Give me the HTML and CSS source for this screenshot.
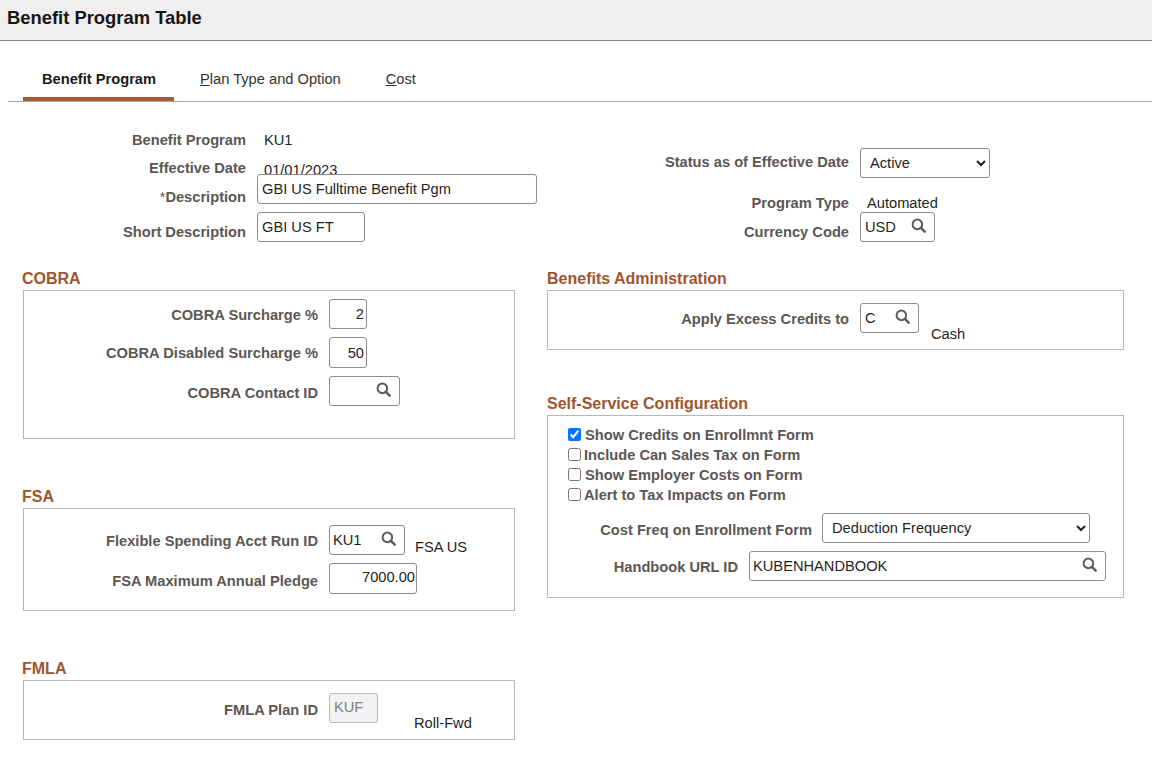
FILE: index.html
```html
<!DOCTYPE html>
<html lang="en">
<head>
    <meta charset="UTF-8">
    <meta name="viewport" content="width=device-width, initial-scale=1.0">
    <title>Benefit Program Table</title>
    <link rel="stylesheet" href="styles.css">
</head>
<body>
    <svg class="icon-defs" width="0" height="0">
        <symbol id="search" viewBox="0 0 16 16">
            <circle cx="6.8" cy="6.8" r="5.1" fill="none" stroke="currentColor" stroke-width="2.1"/>
            <path d="M10.6 10.6L14.6 14.6" fill="none" stroke="currentColor" stroke-width="2.6" stroke-linecap="round"/>
        </symbol>
    </svg>

    <header class="page-title">Benefit Program Table</header>

    <nav class="tabs">
        <a class="tab active">Benefit Program</a>
        <a class="tab"><u>P</u>lan Type and Option</a>
        <a class="tab"><u>C</u>ost</a>
    </nav>

    <main class="columns">
        <div class="left-col">
            <div class="top-block top-left">
                <div class="row row-program">
                    <label class="field-label">Benefit Program</label>
                    <span class="value">KU1</span>
                </div>
                <div class="row row-date">
                    <label class="field-label">Effective Date</label>
                    <span class="value">01/01/2023</span>
                </div>
                <div class="row row-desc">
                    <label class="field-label"><span class="req">*</span>Description</label>
                    <input type="text" class="input desc-input" value="GBI US Fulltime Benefit Pgm">
                </div>
                <div class="row row-short">
                    <label class="field-label">Short Description</label>
                    <input type="text" class="input short-input" value="GBI US FT">
                </div>
            </div>

            <h2 class="section-title">COBRA</h2>
            <section class="box cobra-box">
                <div class="row row-pad6">
                    <label class="field-label">COBRA Surcharge %</label>
                    <input type="text" class="input num pct-input" value="2">
                </div>
                <div class="row row-pad6 row-tall">
                    <label class="field-label">COBRA Disabled Surcharge %</label>
                    <input type="text" class="input num pct-input" value="50">
                </div>
                <div class="row row-pad7">
                    <label class="field-label">COBRA Contact ID</label>
                    <div class="lookup contact-lookup">
                        <input type="text" value="">
                        <svg class="search-icon"><use href="#search"/></svg>
                    </div>
                </div>
            </section>

            <h2 class="section-title spaced">FSA</h2>
            <section class="box fsa-box">
                <div class="row row-pad6">
                    <label class="field-label">Flexible Spending Acct Run ID</label>
                    <div class="lookup run-lookup">
                        <input type="text" value="KU1">
                        <svg class="search-icon"><use href="#search"/></svg>
                    </div>
                    <span class="value fsa-note">FSA US</span>
                </div>
                <div class="row row-pad8 row-tall">
                    <label class="field-label">FSA Maximum Annual Pledge</label>
                    <input type="text" class="input num pledge-input" value="7000.00">
                </div>
            </section>

            <h2 class="section-title spaced">FMLA</h2>
            <section class="box fmla-box">
                <div class="row row-pad7">
                    <label class="field-label">FMLA Plan ID</label>
                    <input type="text" class="input plan-input" value="KUF" disabled>
                    <span class="value fmla-note">Roll-Fwd</span>
                </div>
            </section>
        </div>

        <div class="right-col">
            <div class="top-block top-right">
                <div class="row row-status">
                    <label class="field-label">Status as of Effective Date</label>
                    <select class="select status-select">
                        <option>Active</option>
                        <option>Inactive</option>
                    </select>
                </div>
                <div class="row row-type">
                    <label class="field-label">Program Type</label>
                    <span class="value">Automated</span>
                </div>
                <div class="row row-short">
                    <label class="field-label">Currency Code</label>
                    <div class="lookup currency-lookup">
                        <input type="text" value="USD">
                        <svg class="search-icon"><use href="#search"/></svg>
                    </div>
                </div>
            </div>

            <h2 class="section-title">Benefits Administration</h2>
            <section class="box admin-box">
                <div class="row row-pad6">
                    <label class="field-label">Apply Excess Credits to</label>
                    <div class="lookup credit-lookup">
                        <input type="text" value="C">
                        <svg class="search-icon"><use href="#search"/></svg>
                    </div>
                    <span class="value cash-note">Cash</span>
                </div>
            </section>

            <h2 class="section-title self-title">Self-Service Configuration</h2>
            <section class="box self-box">
                <label class="check-row"><input type="checkbox" checked><span class="wide">Show Credits on Enrollmnt Form</span></label>
                <label class="check-row"><input type="checkbox"><span>Include Can Sales Tax on Form</span></label>
                <label class="check-row"><input type="checkbox"><span class="wide">Show Employer Costs on Form</span></label>
                <label class="check-row"><input type="checkbox"><span>Alert to Tax Impacts on Form</span></label>
                <div class="row row-freq">
                    <label class="field-label">Cost Freq on Enrollment Form</label>
                    <select class="select freq-select">
                        <option>Deduction Frequency</option>
                        <option>Annual</option>
                    </select>
                </div>
                <div class="row row-pad6 row-handbook">
                    <label class="field-label">Handbook URL ID</label>
                    <div class="lookup handbook-lookup">
                        <input type="text" value="KUBENHANDBOOK">
                        <svg class="search-icon"><use href="#search"/></svg>
                    </div>
                </div>
            </section>
        </div>
    </main>
</body>
</html>
```

FILE: styles.css
```css
* {
    box-sizing: border-box;
}

body {
    margin: 0;
    background-color: #fff;
    color: #1f1f1f;
    font-family: "Liberation Sans", Arial, sans-serif;
    font-size: 14.67px;
    line-height: 20px;
}

.icon-defs {
    display: block;
    height: 0;
}

.page-title {
    height: 41px;
    padding: 7px 0 0 7px;
    background-color: #f0efed;
    border-bottom: 1px solid #8c8984;
    color: #161616;
    font-size: 18.4px;
    font-weight: bold;
    line-height: 22px;
}

.tabs {
    display: flex;
    align-items: flex-end;
    gap: 7px;
    height: 61px;
    margin-left: 8px;
    padding-left: 15px;
    border-bottom: 1px solid #a9a5a0;
}

.tab {
    height: 32px;
    padding: 0 19px;
    color: #333;
    line-height: 20px;
    white-space: nowrap;
}

.tab.active {
    width: 151px;
    padding-right: 0;
    border-bottom: 4px solid #a55a37;
    color: #1a1a1a;
    font-weight: bold;
}

.columns {
    display: flex;
    gap: 32px;
    margin-left: 23px;
}

.left-col {
    width: 492px;
}

.right-col {
    width: 577px;
}

.top-block {
    height: 167px;
}

.top-left {
    padding-top: 28px;
}

.top-right {
    padding-top: 46px;
}

.section-title {
    height: 18px;
    margin: 0 0 3px -1px;
    color: #a0552f;
    font-size: 16px;
    font-weight: bold;
    line-height: 20px;
}

.right-col .section-title {
    margin-left: 0;
}

.section-title.spaced {
    margin-top: 48px;
}

.right-col .self-title {
    margin-top: 44px;
}

.box {
    border: 1px solid #b9b5b0;
}

.row {
    display: flex;
    align-items: flex-start;
    height: 30px;
}

.field-label {
    flex: none;
    color: #5b5754;
    font-weight: bold;
    text-align: right;
}

.req {
    font-weight: normal;
}

.value {
    margin-left: 18px;
}

.input,
.lookup,
.select {
    flex: none;
    height: 30px;
    margin-left: 11px;
    background-color: #fff;
    border: 1px solid #8f8b86;
    border-radius: 3px;
    color: #1f1f1f;
    font-family: inherit;
    font-size: 14.67px;
}

.input {
    padding: 0 4px;
}

.input.num {
    padding-right: 2px;
    text-align: right;
}

.input:disabled {
    background-color: #f3f2f0;
    border-color: #bdbab6;
    color: #80807e;
}

.select {
    padding-left: 5px;
}

.lookup {
    display: flex;
    align-items: center;
}

.lookup input {
    flex: 1;
    min-width: 0;
    height: 100%;
    padding: 0 0 0 4px;
    background: none;
    border: none;
    outline: none;
    color: inherit;
    font-family: inherit;
    font-size: 14.67px;
}

.search-icon {
    flex: none;
    width: 15px;
    height: 15px;
    margin: 0 8px 4px 0;
    color: #5f5b57;
}

/* top left rows */
.top-left .field-label {
    width: 223px;
}

.top-left .row-program {
    height: 20px;
}

.top-left .row-date {
    height: 16px;
    margin-top: 8px;
}

.row-date .value {
    padding-top: 2px;
}

.row-desc .field-label {
    padding-top: 13px;
}

.desc-input {
    width: 280px;
}

.row-short {
    margin-top: 8px;
}

.row-short .field-label {
    padding-top: 10px;
}

.short-input {
    width: 108px;
}

/* top right rows */
.top-right .field-label {
    width: 302px;
}

.row-status .field-label {
    padding-top: 4px;
}

.status-select {
    width: 130px;
}

.row-type {
    height: 20px;
    margin-top: 14px;
}

.row-type .value,
.row-type .field-label {
    padding-top: 1px;
}

.top-right .row-short {
    margin-top: 0;
}

.currency-lookup {
    width: 75px;
}

/* shared label offsets inside boxes */
.row-pad6 .field-label {
    padding-top: 6px;
}

.row-pad7 .field-label {
    padding-top: 7px;
}

.row-pad8 .field-label {
    padding-top: 8px;
}

.row-tall,
.row-tall .input {
    height: 31px;
}

/* COBRA */
.cobra-box {
    height: 149px;
    padding-top: 8px;
}

.cobra-box .row + .row {
    margin-top: 8px;
}

.cobra-box .field-label,
.fsa-box .field-label,
.fmla-box .field-label {
    width: 294px;
}

.pct-input {
    width: 38px;
}

.contact-lookup {
    width: 71px;
}

/* FSA */
.fsa-box {
    height: 103px;
    padding-top: 16px;
}

.fsa-box .row + .row {
    margin-top: 8px;
}

.run-lookup {
    width: 76px;
}

.run-lookup input,
.handbook-lookup input {
    padding-left: 3px;
}

.fsa-note {
    margin-left: 10px;
    padding-top: 12px;
}

.input.pledge-input {
    width: 88px;
    padding-right: 1px;
    padding-bottom: 3px;
}

/* FMLA */
.fmla-box {
    height: 60px;
    padding-top: 12px;
}

.plan-input {
    width: 49px;
    padding-bottom: 2px;
}

.fmla-note {
    margin-left: 36px;
    padding-top: 20px;
}

/* Benefits Administration */
.admin-box {
    height: 60px;
    padding-top: 12px;
}

.admin-box .field-label {
    width: 301px;
}

.credit-lookup {
    width: 59px;
}

.cash-note {
    margin-left: 12px;
    padding-top: 21px;
}

/* Self-Service Configuration */
.self-box {
    height: 183px;
    padding: 8px 0 0 20px;
}

.check-row {
    display: flex;
    align-items: center;
    height: 20px;
    color: #5b5754;
    font-weight: bold;
}

.check-row input {
    flex: none;
    width: 13px;
    height: 13px;
    margin: 0 3px 0 0;
}

.check-row span {
    padding-top: 1px;
}

.check-row .wide {
    margin-left: 1px;
}

.row-freq {
    margin-top: 9px;
    margin-left: -20px;
}

.row-freq .field-label {
    width: 264px;
    padding-top: 7px;
}

.freq-select {
    width: 268px;
    margin-left: 10px;
}

.row-handbook {
    margin-top: 8px;
    margin-left: -20px;
}

.row-handbook .field-label {
    width: 190px;
}

.handbook-lookup {
    width: 357px;
}
```
